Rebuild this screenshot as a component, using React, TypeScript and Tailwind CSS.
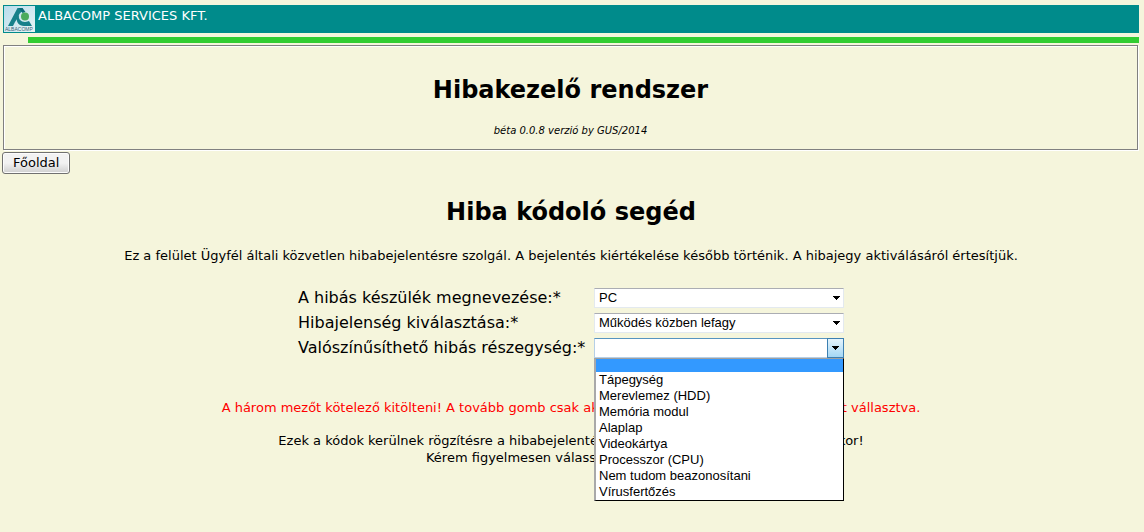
import { useState } from "react";

const devices = ["PC", "Notebook", "Monitor", "Nyomtató"];
const symptoms = ["Működés közben lefagy", "Nem kapcsol be", "Nincs kép"];
const parts = [
  "",
  "Tápegység",
  "Merevlemez (HDD)",
  "Memória modul",
  "Alaplap",
  "Videokártya",
  "Processzor (CPU)",
  "Nem tudom beazonosítani",
  "Vírusfertőzés",
];

function Logo() {
  return (
    <svg viewBox="0 0 31 26" className="block h-[26px] w-[31px] shrink-0" aria-hidden="true">
      <defs>
        <linearGradient id="sky" x1="0" y1="0" x2="1" y2="1">
          <stop offset="0" stopColor="#b9dcec" />
          <stop offset="1" stopColor="#e6f4f4" />
        </linearGradient>
      </defs>
      <rect width="31" height="26" fill="url(#sky)" />
      <path d="M13.500 2h5l1 3c-3 1-5 3-5 6l-3.500 5-2 4H4z" fill="#17808a" />
      <path d="M15 2h3.500l3 4-3 1z" fill="#0c6b78" />
      <circle cx="21" cy="10.500" r="4" fill="#4bab5c" />
      <path d="M15 9c-1 4 2 7 6 7 2 0 3-1 4-1l3 5h-8c-5 0-8-4-7-8z" fill="#17808a" />
      <text x="1" y="25" fontSize="5" fill="#3c5f78" fontFamily="Liberation Sans, sans-serif">
        ALBACOMP
      </text>
    </svg>
  );
}

function Arrow() {
  return (
    <svg viewBox="0 0 7 4" className="h-1 w-[7px]" aria-hidden="true" shapeRendering="crispEdges">
      <path d="M0 0h7v1h-1v1h-1v1h-1v1h-1v-1h-1v-1h-1v-1h-1z" fill="#000" />
    </svg>
  );
}

type SelectFieldProps = {
  id: string;
  options: string[];
  value: string;
  onChange: (value: string) => void;
};

function SelectField({ id, options, value, onChange }: SelectFieldProps) {
  return (
    <div className="relative">
      <select
        id={id}
        value={value}
        onChange={(e) => onChange(e.target.value)}
        className="block h-5 w-[250px] appearance-none border border-[#e3e9ef] border-t-[#abadb3] bg-white pl-1 pr-5 font-['Liberation_Sans',sans-serif] text-[13px] leading-4 text-black"
      >
        {options.map((o) => (
          <option key={o}>{o}</option>
        ))}
      </select>
      <span className="pointer-events-none absolute inset-y-0 right-1 flex items-center">
        <Arrow />
      </span>
    </div>
  );
}

export default function App() {
  const [device, setDevice] = useState("PC");
  const [symptom, setSymptom] = useState("Működés közben lefagy");
  const [part, setPart] = useState("");
  const [open, setOpen] = useState(true);

  return (
    <div className="min-h-screen bg-[#f5f5dc] pt-[5px] pr-[5px] pb-8 pl-[3px] font-['DejaVu_Sans',sans-serif] text-[13px] leading-4 text-black">
      <header className="flex h-7 bg-[#008b8b] p-px text-white">
        <Logo />
        <span className="pt-0.5 pl-[3px]">ALBACOMP SERVICES KFT.</span>
      </header>
      <div className="mt-1 ml-[25px] h-1.5 bg-[#32cd32]" />

      <div className="mt-0.5 mr-px flex flex-col items-center border border-[#808080] pt-7 pb-2.5 text-center shadow-[1px_1px_0_#fff,inset_1px_1px_0_#fff]">
        <h1 className="text-2xl leading-8 font-bold">Hibakezelő rendszer</h1>
        <p className="mt-[17px] text-[10px] leading-4 italic">béta 0.0.8 verzió by GUS/2014</p>
      </div>

      <button
        type="button"
        className="mt-0.5 -ml-px block h-[22px] rounded-[3px] border border-[#707070] bg-linear-to-b from-[#f2f2f2] from-50% to-[#cfcfcf] to-100% px-2.5 leading-4 shadow-[inset_0_0_0_1px_#fcfcfc]"
      >
        Főoldal
      </button>

      <main className="flex flex-col items-center text-center">
        <h2 className="mt-[22px] text-2xl leading-8 font-bold">Hiba kódoló segéd</h2>
        <p className="mt-5 leading-4">
          Ez a felület Ügyfél általi közvetlen hibabejelentésre szolgál. A bejelentés kiértékelése később történik. A hibajegy aktiválásáról értesítjük.
        </p>

        <form className="mt-6 grid grid-cols-[minmax(292px,auto)_250px] items-center gap-x-1 gap-y-[5px] text-left text-base leading-5">
          <label htmlFor="device">A hibás készülék megnevezése:*</label>
          <SelectField id="device" options={devices} value={device} onChange={setDevice} />

          <label htmlFor="symptom">Hibajelenség kiválasztása:*</label>
          <SelectField id="symptom" options={symptoms} value={symptom} onChange={setSymptom} />

          <label htmlFor="part">Valószínűsíthető hibás részegység:*</label>
          <div className="relative">
            <button
              id="part"
              type="button"
              aria-haspopup="listbox"
              aria-expanded={open}
              onClick={() => setOpen(!open)}
              className="flex h-5 w-[250px] items-stretch justify-between border border-[#b5cfe7] border-t-[#5794bf] bg-white pl-1 font-['Liberation_Sans',sans-serif] text-[13px] leading-4"
            >
              <span>{part}</span>
              <span className="-my-px -mr-px flex w-[17px] items-center justify-center border border-[#3c7fb1] bg-linear-to-b from-[#e5f4fc] to-[#a3d7f5]">
                <Arrow />
              </span>
            </button>
            {open && (
              <ul
                role="listbox"
                aria-labelledby="part"
                className="absolute top-full left-0 z-10 w-[250px] border border-black border-t-[#a0a0a0] border-l-2 border-l-[#a9a9a9] bg-white font-['Liberation_Sans',sans-serif] text-[13px] leading-4"
              >
                {parts.map((p) => (
                  <li
                    key={p}
                    role="option"
                    aria-selected={p === part}
                    onClick={() => {
                      setPart(p);
                      setOpen(false);
                    }}
                    className={`pl-[3px] ${p === "" ? "h-[13px]" : "h-4"} ${p === part ? "bg-[#3399ff] text-white" : ""}`}
                  >
                    {p}
                  </li>
                ))}
              </ul>
            )}
          </div>
        </form>

        <p className="mt-[42px] text-[#ff0000]">
          A három mezőt kötelező kitölteni! A tovább gomb csak akkor aktív, ha mindegyik mező is ki lett vállasztva.
        </p>
        <p className="mt-4 leading-[17px]">
          Ezek a kódok kerülnek rögzítésre a hibabejelentés során, a hibabejelentő lap kitöltésekor!
          <br />
          Kérem figyelmesen válassza ki az értékeket!
        </p>
      </main>
    </div>
  );
}
